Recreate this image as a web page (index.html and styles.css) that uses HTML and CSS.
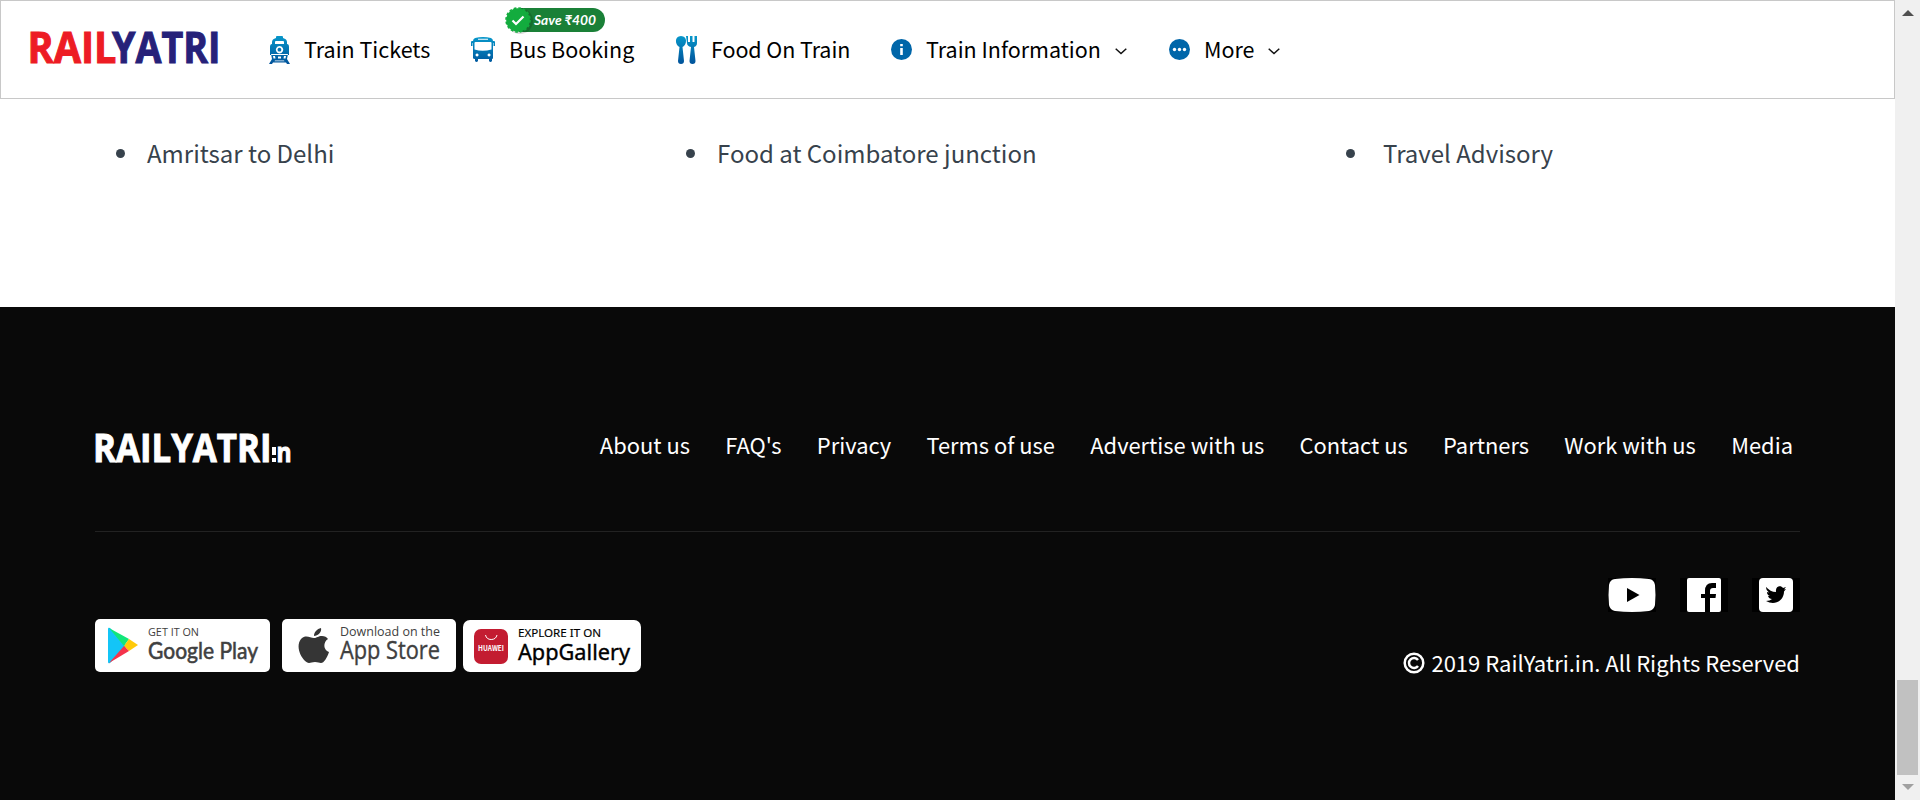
FILE: index.html
```html
<!DOCTYPE html>
<html lang="en">
<head>
<meta charset="utf-8">
<title>RailYatri</title>
<link rel="stylesheet" href="styles.css">
</head>
<body>
<div class="page">
<header class="header">
  <svg class="logo" width="190" height="34" viewBox="0 0 190 34"><text y="32" font-size="43" font-weight="bold" textLength="89" lengthAdjust="spacingAndGlyphs" x="-2.500" class="red">RAIL</text><text y="32" x="82" font-size="43" font-weight="bold" textLength="108.500" lengthAdjust="spacingAndGlyphs" class="navy">YATRI</text></svg>
  <nav class="nav">
    <a class="item train">
      <svg width="21" height="28" viewBox="0 0 21 28"><defs><linearGradient id="g" x2="0" y2="28" gradientUnits="userSpaceOnUse"><stop stop-color="#0797ca"/><stop offset="1" stop-color="#00529a"/></linearGradient></defs><path fill="url(#g)" fill-rule="evenodd" d="M7 1q0-1 1-1h5q1 0 1 1v1q4 1 4 4v2q2 0 2 3v8H1v-8q0-3 2-3V6q0-3 4-4zM6 6v2h9V6q0-1-1-1H7Q6 5 6 6zM10.500 10a3.700 3.700 0 1 0 .1 0zM10.500 11.800a1.900 1.900 0 1 1-.1 0zM2 18h17l-1 5 3 5h-3l-1-1.500H4L3 28H0l3-5zM4 20l.5 2.500h2L6 20zM9 20.500v2h3v-2zM15 20l-.500 2.500h2L17 20zM6 24.500l-.500.8h10l-.500-.8z"/></svg>
      <span>Train Tickets</span></a>
    <a class="item bus">
      <svg width="24" height="25" viewBox="0 0 24 25"><path fill="url(#g)" fill-rule="evenodd" d="M4 1q8-2 16 0 2 1 2 3h1q1 0 1 1v4h-1.500V6H22v15q0 1-1 1v2q-1.500 2-3 0v-2H7v2q-1.500 2-3 0v-2q-2 0-2-1V6h-.500v3H0V5q0-1 1-1h1q0-2 2-3zM7 1.800v1h10v-1zM4.500 5q-1 0-1 1v6.500q8 2.500 17 0V6q0-1-1-1zM6 16.500a1.500 1.500 0 1 0 .1 0zM18 16.500a1.500 1.500 0 1 0 .1 0z"/></svg>
      <span>Bus Booking</span>
      <svg class="save" width="104" height="30" viewBox="0 0 104 30"><path d="M14 3h74a12 12 0 0 1 0 24H14z" fill="#1a8037"/><circle cx="15" cy="16" r="13" fill="#000" opacity=".15"/><circle cx="13" cy="15" r="11.800" fill="#13ac3e"/><circle cx="13" cy="15" r="12" fill="none" stroke="#13ac3e" stroke-width="1.600" stroke-dasharray="2.700 2.010"/><path d="M7.500 15.500l3.500 3.500 7.500-7.500" fill="none" stroke="#fff" stroke-width="2.200"/><text x="29" y="20" font-size="14" textLength="62" lengthAdjust="spacingAndGlyphs" class="savetext">Save ₹400</text></svg></a>
    <a class="item food">
      <svg width="21" height="28" viewBox="0 0 21 28"><path fill="url(#g)" d="M5 0c7 0 6 9 1.500 11L8 25q0 3-3 3t-3-3l1.500-14C-1 9-2 0 5 0zM10 0h2v6h2V0h2.500v6h2V0H21v7q0 3-3 4l1.500 14q0 3-3 3t-3-3L15 11q-4-1-4-4z"/></svg>
      <span>Food On Train</span></a>
    <a class="item info">
      <svg width="21" height="21" viewBox="0 0 21 21"><circle cx="10.500" cy="10.500" r="10.500" fill="#0066a9"/><path d="M10.500 9v7M10.500 5v2.200" stroke="#fff" stroke-width="2.600"/></svg>
      <span>Train Information</span>
      <svg class="chev" width="12" height="7" viewBox="0 0 12 7"><path d="M.7.800L6 5.500 11.300.800"/></svg></a>
    <a class="item more">
      <svg width="21" height="21" viewBox="0 0 21 21"><circle cx="10.500" cy="10.500" r="10.500" fill="#0066a9"/><g fill="#fff"><circle cx="5.500" cy="10.500" r="1.700"/><circle cx="10.500" cy="10.500" r="1.700"/><circle cx="15.500" cy="10.500" r="1.700"/></g></svg>
      <span>More</span>
      <svg class="chev" width="12" height="7" viewBox="0 0 12 7"><path d="M.7.800L6 5.500 11.300.800"/></svg></a>
  </nav>
</header>
<main class="links">
  <a>Amritsar to Delhi</a><a>Food at Coimbatore junction</a><a class="wide">Travel Advisory</a>
</main>
<footer class="footer">
  <div class="top">
    <svg class="flogo" width="197" height="34" viewBox="0 0 197 34" font-weight="bold"><text x="-2" y="32" font-size="40" textLength="178.500" lengthAdjust="spacingAndGlyphs">RAILYATRI</text><path d="M177 17h4v8h-4zM177 28h4v4h-4z"/><text x="181.500" y="32" font-size="26" textLength="15" lengthAdjust="spacingAndGlyphs">n</text></svg>
    <nav class="fnav"><a>About us</a><a>FAQ's</a><a>Privacy</a><a>Terms of use</a><a>Advertise with us</a><a>Contact us</a><a>Partners</a><a>Work with us</a><a>Media</a></nav>
  </div>
  <div class="bottom">
    <div class="stores">
      <svg width="175" height="53" viewBox="0 0 175 53"><rect width="175" height="53" rx="5" fill="#fff"/><path d="M13 10q0-2 2-1l17 18-17 17q-2 1-2-1z" fill="#13c5f7"/><path d="M14 9l20 11-5 7z" fill="#12e67a"/><path d="M34 20l9 6-9 6-5-5z" fill="#ffca09"/><path d="M29 27l5 5-20 12z" fill="#f5334b"/><text x="53" y="17" font-size="11.500" textLength="51" lengthAdjust="spacingAndGlyphs" class="store thin">GET IT ON</text><text x="53" y="40" font-size="24" textLength="110" lengthAdjust="spacingAndGlyphs" class="store google">Google Play</text></svg>
      <svg width="174" height="53" viewBox="0 0 174 53"><rect width="174" height="53" rx="5" fill="#fff"/><path fill="#353535" d="M39 9c1 4-3 8-7 8 0-4 3-7 7-8zM32 19c3 0 4-2 8-2q4 0 6 3c-5 3-5 11 1 13-2 6-5 11-8 11-2 0-3-1-6-1s-4 1-6 1C22 44 12 29 19 20c5-5 9-1 13-1z"/><text x="58" y="17" font-size="12" textLength="100" lengthAdjust="spacingAndGlyphs" class="store thin">Download on the</text><text x="58" y="39.500" font-size="25" textLength="100" lengthAdjust="spacingAndGlyphs" class="store">App Store</text></svg>
      <svg class="gallery" width="178" height="52" viewBox="0 0 178 52"><rect width="178" height="52" rx="7" fill="#fff"/><rect x="11" y="9" width="34" height="35" rx="7" fill="#c31c31"/><path d="M22.500 15q1 4.500 5.700 4.500T34 15" fill="none" stroke="#fff" stroke-width="1"/><text x="15" y="31" font-size="7" font-weight="bold" textLength="26" lengthAdjust="spacingAndGlyphs" fill="#fff">HUAWEI</text><text x="55" y="17" font-size="11.500" textLength="83" lengthAdjust="spacingAndGlyphs" class="explore">EXPLORE IT ON</text><text x="55" y="40" font-size="22.500" textLength="112" lengthAdjust="spacingAndGlyphs" class="explore big">AppGallery</text></svg>
    </div>
    <div class="right">
      <div class="social">
        <svg width="48" height="34" viewBox="0 0 48 34"><path fill="#000" d="M0 0h48v34H0z"/><path d="M7 1q17-2 34 0 5 .5 6 6 1 10 0 20-1 5-6 6-17 2-34 0-5-1-6-6-1-10 0-20 1-5.500 6-6z" fill="#fff"/><path d="M19 10v14l12.500-7z"/></svg>
        <svg width="48" height="34" viewBox="0 0 48 34"><path d="M0 0h48v34H0z"/><rect x="7" width="34" height="34" rx="2" fill="#fff"/><path d="M25 34V20h-4v-4h4v-3q0-8 7-8h4v5h-3q-3 0-3 3v3h6l-.500 4H30v14z"/></svg>
        <svg width="48" height="34" viewBox="0 0 48 34"><path d="M0 0h48v34H0z"/><rect x="7" width="34" height="34" rx="4" fill="#fff"/><path d="M14 9c3 3 6 5 10 5-1-6 5-7 7-4l3-1-2 2.500 2-.500-2 2.500c0 9-9 14.500-18 9.500q4 0 6-2-3 0-4-3h2q-3-1-3-4l2 .5q-3-2-3-5z"/></svg>
      </div>
      <div class="copy"><svg width="22" height="22" viewBox="0 0 22 22" fill="none" stroke="#fff" stroke-width="2.500"><circle cx="11" cy="11" r="9.300"/><path d="M15 8a5 5 0 1 0 0 6"/></svg><span>2019 RailYatri.in. All Rights Reserved</span></div>
    </div>
  </div>
</footer>
</div>
<aside class="scroll"><i class="up"></i><i class="thumb"></i><i class="down"></i></aside>
</body>
</html>
```
FILE: styles.css
```css
* { box-sizing: border-box; }
body { margin: 0; height: 800px; overflow: hidden; display: flex; background: #fff; font-family: "Noto Sans CJK SC", "Noto Sans CJK JP", sans-serif; color: #000; }
svg { display: block; flex: none; overflow: visible; }
.page { width: 1895px; height: 800px; display: flex; flex-direction: column; }
.header { height: 99px; border: 1px solid #c8c8c8; padding-left: 29px; display: flex; align-items: flex-start; }
.logo { margin-top: 30px; }
.logo, .flogo { font-family: "Open Sans", sans-serif; stroke-width: 1; }
.flogo { fill: #fff; }
.flogo text { stroke: #fff; }
.red { fill: #ed1c24; stroke: #ed1c24; }
.navy { fill: #262179; stroke: #262179; }
.nav { display: grid; grid-template-columns: 202px 205px 215px 278px 150px; margin-left: 49px; height: 97px; }
.item { display: flex; align-items: center; height: 97px; position: relative; font-size: 21.500px; line-height: 30px; white-space: nowrap; }
.item > span { margin: 0 0 2px 14px; }
.item.food > span { letter-spacing: -.08px; }
.item.info > svg:first-child, .item.more > svg:first-child { margin-bottom: 1px; }
.chev { margin: 4px 0 0 14px; fill: none; stroke: #111; stroke-width: 1.500; }
.more .chev { margin-left: 13px; }
.save { position: absolute; left: 34px; top: 4px; }
.savetext { font-family: Lato, sans-serif; font-weight: bold; font-style: italic; fill: #fff; }
.links { height: 208px; padding: 34px 0 0 120px; display: grid; grid-template-columns: 570px 660px 400px; align-items: start; font-size: 24px; line-height: 40px; color: #37424c; }
.links a { display: flex; align-items: center; white-space: nowrap; }
.links a::before { content: ""; width: 9px; height: 9px; margin: 0 22px 0 -4px; border-radius: 50%; background: #37424c; }
.links a.wide::before { margin-right: 28px; }
.footer { height: 493px; background: #090909; padding: 0 95px; color: #fff; }
.top { height: 225px; padding-top: 123px; border-bottom: 1px solid #222; display: flex; justify-content: space-between; align-items: flex-start; }
.fnav { display: flex; gap: 35.300px; margin-top: -2px; padding-right: 7px; font-size: 21.900px; line-height: 34px; white-space: nowrap; }
.bottom { display: flex; justify-content: space-between; padding-top: 46px; }
.stores { display: flex; margin-top: 41px; }
.stores svg + svg { margin-left: 12px; }
.stores svg.gallery { margin: 1px 0 0 7px; }
.store { fill: #404040; font-family: "Open Sans", sans-serif; stroke: #404040; stroke-width: .4; }
.store.thin { stroke-width: 0; }
.store.google { font-family: Lato, sans-serif; stroke-width: .6; }
.explore { fill: #000; font-family: "Noto Sans", sans-serif; stroke: #000; stroke-width: .15; }
.explore.big { stroke-width: .4; }
.right { display: flex; flex-direction: column; align-items: flex-end; }
.social { display: flex; gap: 24px; }
.copy { display: flex; align-items: center; gap: 6px; margin-top: 33px; font-size: 22px; line-height: 34px; white-space: nowrap; }
.copy span { margin-bottom: 3px; }
.copy svg { margin-bottom: 1px; }
.scroll { width: 25px; height: 800px; background: #f0f0f0; display: flex; flex-direction: column; align-items: center; }
.up { border: 6px solid transparent; border-top: 0; border-bottom-color: #505050; margin-top: 10px; }
.thumb { width: 21px; height: 95px; background: #c1c1c1; margin-top: 664px; }
.down { border: 6px solid transparent; border-bottom: 0; border-top-color: #a0a0a0; margin-top: 9px; }
```
